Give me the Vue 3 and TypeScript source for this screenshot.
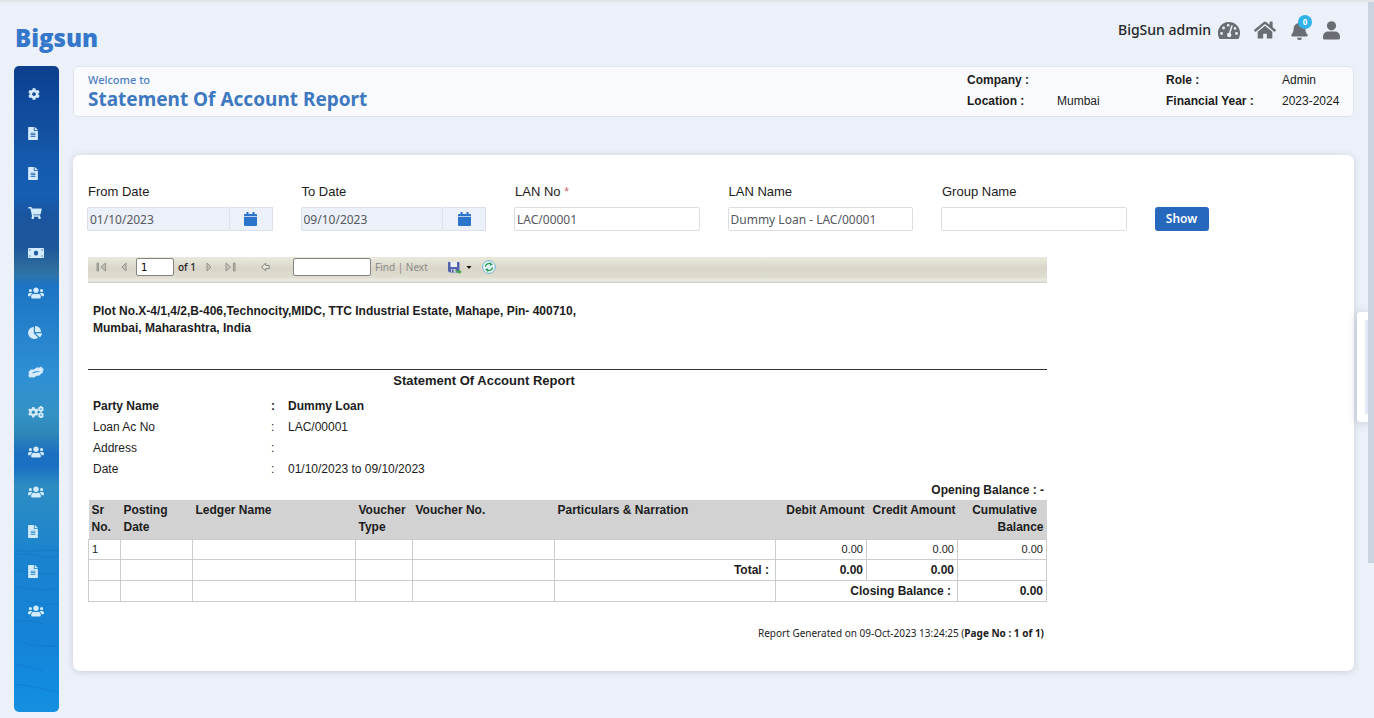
<script setup lang="ts">
import { ref } from 'vue'

interface Glyph {
  box: string
  width: number
  height: number
  path: string
}

const filePath =
  'M224 136V0H24C10.700 0 0 10.700 0 24v464c0 13.300 10.700 24 24 24h336c13.300 0 24-10.700 24-24V160H248c-13.200 0-24-10.800-24-24zm64 236c0 6.600-5.400 12-12 12H108c-6.600 0-12-5.400-12-12v-8c0-6.600 5.400-12 12-12h168c6.600 0 12 5.400 12 12v8zm0-64c0 6.600-5.400 12-12 12H108c-6.600 0-12-5.400-12-12v-8c0-6.600 5.400-12 12-12h168c6.600 0 12 5.400 12 12v8zm0-72v8c0 6.600-5.400 12-12 12H108c-6.600 0-12-5.400-12-12v-8c0-6.600 5.400-12 12-12h168c6.600 0 12 5.400 12 12zm96-114.100v6.100H256V0h6.100c6.400 0 12.500 2.500 17 7l97.900 98c4.500 4.500 7 10.600 7 16.900z'

const glyphs: Record<string, Glyph> = {
  cog: {
    box: '0 0 512 512', width: 12, height: 12,
    path: 'M487.4 315.7l-42.6-24.6c4.3-23.2 4.3-47 0-70.2l42.6-24.6c4.900-2.800 7.100-8.600 5.500-14-11.100-35.600-30-67.800-54.700-94.600-3.800-4.100-10-5.100-14.800-2.300L380.800 110c-17.900-15.400-38.500-27.300-60.800-35.100V25.800c0-5.600-3.900-10.500-9.400-11.700-36.700-8.200-74.300-7.800-109.200 0-5.500 1.200-9.400 6.100-9.400 11.700V75c-22.200 7.900-42.800 19.800-60.800 35.100L88.700 85.500c-4.900-2.800-11-1.900-14.800 2.300-24.700 26.700-43.600 58.900-54.700 94.600-1.700 5.400.6 11.200 5.500 14L67.300 221c-4.300 23.200-4.300 47 0 70.200l-42.600 24.600c-4.900 2.800-7.100 8.600-5.500 14 11.100 35.600 30 67.800 54.700 94.600 3.800 4.100 10 5.100 14.800 2.300l42.600-24.600c17.900 15.400 38.500 27.300 60.800 35.100v49.200c0 5.600 3.900 10.500 9.400 11.700 36.700 8.200 74.300 7.800 109.200 0 5.500-1.200 9.400-6.100 9.400-11.700v-49.200c22.200-7.900 42.800-19.800 60.800-35.100l42.600 24.600c4.900 2.800 11 1.900 14.800-2.300 24.700-26.700 43.600-58.900 54.700-94.600 1.500-5.500-.7-11.300-5.600-14.100zM256 336c-44.100 0-80-35.900-80-80s35.900-80 80-80 80 35.900 80 80-35.900 80-80 80z',
  },
  file: { box: '0 0 384 512', width: 10, height: 13, path: filePath },
  cart: {
    box: '0 0 576 512', width: 14, height: 12,
    path: 'M528.120 301.319l47.273-208C578.806 78.301 567.391 64 551.990 64H159.208l-9.166-44.810C147.758 8.021 137.930 0 126.529 0H24C10.745 0 0 10.745 0 24v16c0 13.255 10.745 24 24 24h69.883l70.248 343.435C147.325 417.100 136 435.222 136 456c0 30.928 25.072 56 56 56s56-25.072 56-56c0-15.674-6.447-29.835-16.824-40h209.647C430.447 426.165 424 440.326 424 456c0 30.928 25.072 56 56 56s56-25.072 56-56c0-22.172-12.888-41.332-31.579-50.405l5.517-24.276c3.413-15.018-8.002-29.319-23.403-29.319H218.117l-6.545-32h293.145c11.206 0 20.920-7.754 23.403-18.681z',
  },
  money: {
    box: '0 0 16 10', width: 16, height: 10,
    path: 'M1 0h14a1 1 0 0 1 1 1v8a1 1 0 0 1-1 1H1a1 1 0 0 1-1-1V1a1 1 0 0 1 1-1zM8 2.400a2.200 2.600 0 1 0 0 5.200a2.200 2.600 0 1 0 0-5.200zM1.400 1.400v1.400a1.400 1.400 0 0 0 1.400-1.400zM14.600 1.400h-1.400a1.400 1.400 0 0 0 1.400 1.400zM1.400 8.600h1.400a1.400 1.400 0 0 0-1.400-1.400zM14.600 8.600v-1.400a1.400 1.400 0 0 0-1.400 1.400z',
  },
  users: {
    box: '0 16 640 480', width: 16, height: 12,
    path: 'M96 224c35.300 0 64-28.700 64-64s-28.700-64-64-64-64 28.700-64 64 28.700 64 64 64zm448 0c35.300 0 64-28.700 64-64s-28.700-64-64-64-64 28.700-64 64 28.700 64 64 64zm32 32h-64c-17.600 0-33.500 7.100-45.100 18.600 40.300 22.100 68.900 62 75.100 109.400h66c17.700 0 32-14.300 32-32v-32c0-35.300-28.700-64-64-64zm-256 0c61.900 0 112-50.100 112-112S381.900 32 320 32 208 82.100 208 144s50.100 112 112 112zm76.800 32h-8.300c-20.800 10-43.900 16-68.500 16s-47.600-6-68.500-16h-8.300C179.600 288 128 339.600 128 403.200V432c0 26.500 21.500 48 48 48h288c26.500 0 48-21.500 48-48v-28.800c0-63.600-51.600-115.200-115.200-115.200zm-223.700-13.400C161.500 263.100 145.600 256 128 256H64c-35.300 0-64 28.700-64 64v32c0 17.700 14.300 32 32 32h65.900c6.300-47.400 34.900-87.300 75.200-109.400z',
  },
  pie: {
    box: '0 0 544 512', width: 14, height: 13,
    path: 'M527.790 288H290.500l158.030 158.030c6.040 6.040 15.980 6.530 22.190.680 38.700-36.460 65.320-85.610 73.130-140.860 1.340-9.460-6.510-17.850-16.060-17.850zm-15.830-64.800C503.720 103.740 408.260 8.280 288.800.040 279.680-.590 272 7.100 272 16.240V240h223.770c9.140 0 16.820-7.680 16.190-16.800zM224 288V50.710c0-9.550-8.390-17.400-17.840-16.060C86.990 51.490-4.100 155.600.140 280.370 4.500 408.510 114.830 513.590 243.030 511.980c50.400-.630 96.970-16.870 135.260-44.030 7.900-5.600 8.420-17.230 1.570-24.080L224 288z',
  },
  hands: {
    box: '0 0 16 12', width: 16, height: 12,
    path: 'M0.400 6.200L2.600 3.600 6 3.400 8.600 1.600 11.600 1.400 13.200 0.600 15.800 3.800 14.600 5.200 15 6.600 12.800 8 11.600 9.600 8.800 9.800 6 11.600 3 11.200 1.600 11.800 0.200 9.200 1.200 8zM4.400 6.600l.5.800 3-1.100 3.400-.2.200-.8-3.600-.1z',
  },
  cogs: {
    box: '0 0 16 12', width: 16, height: 12,
    path: 'M4.300 1h2l.4 1.500 1.200.6 1.500-.5 1 1.700L9.300 5.500v1.300l1.100 1.100-1 1.700-1.500-.4-1.200.7-.4 1.500h-2l-.4-1.500-1.200-.7-1.500.4-1-1.700 1.100-1.100V5.500L.2 4.300l1-1.700 1.500.5 1.200-.6zM5.300 4.500a1.700 1.700 0 1 0 0 3.400a1.700 1.700 0 1 0 0-3.400zM12.200 0h1.400l.4.8 1 .1.700 1.200-.5.900.5.900-.7 1.200-1 .1-.4.800h-1.400l-.4-.8-1-.1-.7-1.200.5-.9-.5-.9.700-1.200 1-.1zM12.900 2.200a.8.8 0 1 0 0 1.600a.8.8 0 1 0 0-1.600zM12.200 6.200h1.400l.4.800 1 .1.700 1.200-.5.900.5.900-.7 1.200-1 .1-.4.800h-1.400l-.4-.8-1-.1-.7-1.200.5-.9-.5-.9.700-1.200 1-.1zM12.900 8.300a.8.8 0 1 0 0 1.600a.8.8 0 1 0 0-1.600z',
  },
}

const menu: { icon: string; title: string }[] = [
  { icon: 'cog', title: 'Settings' },
  { icon: 'file', title: 'Documents' },
  { icon: 'file', title: 'Forms' },
  { icon: 'cart', title: 'Purchases' },
  { icon: 'money', title: 'Payments' },
  { icon: 'users', title: 'Customers' },
  { icon: 'pie', title: 'Analytics' },
  { icon: 'hands', title: 'Partners' },
  { icon: 'cogs', title: 'Utilities' },
  { icon: 'users', title: 'Members' },
  { icon: 'users', title: 'Groups' },
  { icon: 'file', title: 'Statements' },
  { icon: 'file', title: 'Reports' },
  { icon: 'users', title: 'Staff' },
]

const fromDate = ref('01/10/2023')
const toDate = ref('09/10/2023')
const lanNo = ref('LAC/00001')
const lanName = ref('Dummy Loan - LAC/00001')
const groupName = ref('')
const page = ref('1')
const search = ref('')

const details = [
  { label: 'Party Name', value: 'Dummy Loan', strong: true },
  { label: 'Loan Ac No', value: 'LAC/00001', strong: false },
  { label: 'Address', value: '', strong: false },
  { label: 'Date', value: '01/10/2023 to 09/10/2023', strong: false },
]
</script>

<template>
  <div class="page">
    <header class="top">
      <a class="brand" href="#">Bigsun</a>
      <nav class="tools" aria-label="Account">
        <span class="who">BigSun admin</span>
        <a href="#" class="tool dash" aria-label="Dashboard">
          <svg width="22" height="17" viewBox="0 0 22 17">
            <path fill="#6a6d73" d="M11 0a11 11 0 0 1 11 11c0 2-.5 3.800-1.300 5.400-.2.400-.6.600-1 .6H2.300c-.4 0-.8-.2-1-.6A11 11 0 0 1 11 0z" />
            <g fill="#ecf0f8"><circle cx="3.600" cy="11.500" r="1.400" /><circle cx="5.600" cy="6" r="1.400" /><circle cx="10.200" cy="3.300" r="1.300" /><circle cx="17" cy="6.400" r="1.300" /><circle cx="18.500" cy="11.500" r="1.400" /></g>
            <path d="M13.900 4l-2.300 7.300" stroke="#ecf0f8" stroke-width="1.500" stroke-linecap="round" />
            <circle cx="11.200" cy="13" r="2.200" fill="#ecf0f8" />
          </svg>
        </a>
        <a href="#" class="tool home" aria-label="Home">
          <svg width="22" height="18" viewBox="0 20 576 472">
            <path fill="#6a6d73" d="M280.370 148.260L96 300.110V464a16 16 0 0 0 16 16l112.060-.290a16 16 0 0 0 15.920-16V368a16 16 0 0 1 16-16h64a16 16 0 0 1 16 16v95.640a16 16 0 0 0 16 16.050L464 480a16 16 0 0 0 16-16V300L295.670 148.260a12.190 12.190 0 0 0-15.300 0zM571.600 251.470L488 182.560V44.050a12 12 0 0 0-12-12h-56a12 12 0 0 0-12 12v72.610L318.470 43a48 48 0 0 0-61 0L4.340 251.470a12 12 0 0 0-1.600 16.900l25.500 31A12 12 0 0 0 45.150 301l235.220-193.740a12.190 12.190 0 0 1 15.300 0L530.900 301a12 12 0 0 0 16.900-1.600l25.500-31a12 12 0 0 0-1.700-16.930z" />
          </svg>
        </a>
        <a href="#" class="tool bell" aria-label="Notifications">
          <svg width="17" height="19" viewBox="0 0 448 512">
            <path fill="#6a6d73" d="M224 512c35.320 0 63.970-28.650 63.970-64H160.030c0 35.350 28.650 64 63.970 64zm215.390-149.710c-19.320-20.760-55.470-51.990-55.470-154.290 0-77.700-54.480-139.900-127.940-155.160V32c0-17.670-14.320-32-31.980-32s-31.980 14.330-31.980 32v20.840C118.560 68.100 64.080 130.300 64.080 208c0 102.300-36.150 133.530-55.470 154.290-6 6.450-8.660 14.160-8.610 21.710.11 16.400 12.980 32 32.100 32h383.800c19.120 0 32-15.600 32.100-32 .05-7.550-2.610-15.270-8.610-21.710z" />
          </svg>
          <span class="count">0</span>
        </a>
        <a href="#" class="tool" aria-label="Profile">
          <svg width="17" height="19" viewBox="0 0 17 19">
            <circle cx="8.500" cy="4.800" r="4.600" fill="#6a6d73" />
            <path fill="#6a6d73" d="M5 10.600h7a5 5 0 0 1 5 5V17a1.600 1.600 0 0 1-1.600 1.600H1.600A1.600 1.600 0 0 1 0 17v-1.400a5 5 0 0 1 5-5z" />
          </svg>
        </a>
      </nav>
    </header>

    <div class="body">
      <nav class="side" aria-label="Main">
        <svg class="sea" viewBox="0 0 45 646" preserveAspectRatio="none" aria-hidden="true">
          <g fill="none" stroke="#0a62b4" stroke-width="1" opacity=".25">
            <path d="M0 484q12 3 22 1t23 0M0 489q14-2 24 1t21-1M0 504q20 4 45 4M0 520q18 5 45 3M10 534q16 6 35 4M0 556q16-3 30 2M8 576q16 6 37 4M0 598q18 3 30 7M0 618q20 2 45 9" />
          </g>
        </svg>
        <a v-for="(item, i) in menu" :key="i" href="#" class="entry" :aria-label="item.title">
          <svg :width="glyphs[item.icon].width" :height="glyphs[item.icon].height" :viewBox="glyphs[item.icon].box">
            <path :d="glyphs[item.icon].path" fill="#d3ebfd" fill-rule="evenodd" />
          </svg>
        </a>
      </nav>

      <main class="main">
        <section class="banner">
          <div>
            <div class="welcome">Welcome to</div>
            <h1>Statement Of Account Report</h1>
          </div>
          <dl class="facts">
            <dt>Company :</dt><dd></dd>
            <dt>Role :</dt><dd>Admin</dd>
            <dt>Location :</dt><dd>Mumbai</dd>
            <dt>Financial Year :</dt><dd>2023-2024</dd>
          </dl>
        </section>

        <section class="card">
          <form class="filters" @submit.prevent>
            <div class="field">
              <label for="from">From Date</label>
              <div class="date">
                <input id="from" v-model="fromDate" type="text">
                <button type="button" aria-label="Choose from date">
                  <svg width="13" height="14" viewBox="0 0 13 14"><path fill="#2b74cc" d="M2.500 0h2v2h4V0h2v2H12a1 1 0 0 1 1 1v1.300H0V3a1 1 0 0 1 1-1h1.500zM0 5h13v8a1 1 0 0 1-1 1H1a1 1 0 0 1-1-1z" /></svg>
                </button>
              </div>
            </div>
            <div class="field">
              <label for="to">To Date</label>
              <div class="date">
                <input id="to" v-model="toDate" type="text">
                <button type="button" aria-label="Choose to date">
                  <svg width="13" height="14" viewBox="0 0 13 14"><path fill="#2b74cc" d="M2.500 0h2v2h4V0h2v2H12a1 1 0 0 1 1 1v1.300H0V3a1 1 0 0 1 1-1h1.500zM0 5h13v8a1 1 0 0 1-1 1H1a1 1 0 0 1-1-1z" /></svg>
                </button>
              </div>
            </div>
            <div class="field">
              <label for="lan">LAN No <span class="star">*</span></label>
              <input id="lan" v-model="lanNo" type="text">
            </div>
            <div class="field">
              <label for="lanname">LAN Name</label>
              <input id="lanname" v-model="lanName" type="text">
            </div>
            <div class="field">
              <label for="group">Group Name</label>
              <input id="group" v-model="groupName" type="text">
            </div>
            <div class="field action">
              <button type="submit" class="show">Show</button>
            </div>
          </form>

          <div class="report">
            <div class="bar">
              <button type="button" class="first" aria-label="First page">
                <svg width="11" height="11" viewBox="0 0 11 11" fill="#c4c3ba" stroke="#94948c"><path d="M1 1h1.500v8H1zM9.500 1v8L5 5z" /></svg>
              </button>
              <button type="button" class="prev" aria-label="Previous page">
                <svg width="6" height="11" viewBox="0 0 6 11" fill="#c4c3ba" stroke="#94948c"><path d="M5 1v8L1 5z" /></svg>
              </button>
              <input v-model="page" class="pageno" type="text" aria-label="Page number">
              <span class="total">of 1</span>
              <button type="button" class="next" aria-label="Next page">
                <svg width="6" height="11" viewBox="0 0 6 11" fill="#c4c3ba" stroke="#94948c"><path d="M1 1v8l4-4z" /></svg>
              </button>
              <button type="button" class="last" aria-label="Last page">
                <svg width="11" height="11" viewBox="0 0 11 11" fill="#c4c3ba" stroke="#94948c"><path d="M1 1v8l4.500-4zM8.500 1H10v8H8.500z" /></svg>
              </button>
              <button type="button" class="back" aria-label="Back to parent report">
                <svg width="9" height="10" viewBox="0 0 9 10" fill="#e8e7de" stroke="#85857d"><path d="M.7 5l4-4v2.500h3.500v3H4.700V9z" /></svg>
              </button>
              <input v-model="search" class="query" type="text" aria-label="Search text">
              <span class="find"><button type="button">Find</button> | <button type="button">Next</button></span>
              <button type="button" class="export" aria-label="Export">
                <svg width="24" height="13" viewBox="0 0 24 13">
                  <path d="M0 1h11.500v10.500H1.500L0 10z" fill="#5562ad" />
                  <path d="M2.500 1h6.500v5H2.500z" fill="#e9edf8" />
                  <path d="M3 8h5v3.500H3z" fill="#cdd2e8" />
                  <path d="M4 8.500h1.500v3H4z" fill="#4a549a" />
                  <path d="M7.500 7.500c.2 2 1.500 2.700 3.200 2.700V8.300L14 11l-3.300 2v-1.300c-2.500.1-4.200-1.500-3.200-4.200z" fill="#4aa84f" />
                  <path d="M18.500 5h5L21 8z" fill="#111" />
                </svg>
              </button>
              <button type="button" class="refresh" aria-label="Refresh">
                <svg width="14" height="14" viewBox="0 0 14 14">
                  <circle cx="7" cy="7" r="6.400" fill="#e5f4f4" stroke="#76b6d0" />
                  <path d="M3.400 6.600a3.600 3.600 0 0 1 5.300-2.700M10.600 7.400a3.600 3.600 0 0 1-5.300 2.700" fill="none" stroke="#2e9e5b" stroke-width="1.300" />
                  <path d="M8 2l3 2.700-3.200 1.100zM6 12l-3-2.700 3.200-1.100z" fill="#2e9e5b" />
                </svg>
              </button>
            </div>

            <p class="address">Plot No.X-4/1,4/2,B-406,Technocity,MIDC, TTC Industrial Estate, Mahape, Pin- 400710,<br>Mumbai, Maharashtra, India</p>

            <h2>Statement Of Account Report</h2>

            <dl class="details">
              <div v-for="d in details" :key="d.label" :class="{ strong: d.strong }">
                <dt>{{ d.label }}</dt><dd class="colon">:</dd><dd>{{ d.value }}</dd>
              </div>
            </dl>

            <div class="opening">Opening Balance : -</div>

            <table>
              <colgroup>
                <col class="c1"><col class="c2"><col class="c3"><col class="c4"><col class="c5"><col><col class="c7"><col class="c7"><col class="c9">
              </colgroup>
              <thead>
                <tr>
                  <th>Sr No.</th><th>Posting Date</th><th>Ledger Name</th><th>Voucher Type</th><th>Voucher No.</th><th>Particulars &amp; Narration</th>
                  <th class="num">Debit Amount</th><th class="num">Credit Amount</th><th class="num">Cumulative&nbsp;&nbsp; Balance</th>
                </tr>
              </thead>
              <tbody>
                <tr class="line">
                  <td>1</td><td></td><td></td><td></td><td></td><td></td>
                  <td class="num">0.00</td><td class="num">0.00</td><td class="num">0.00</td>
                </tr>
                <tr class="sum">
                  <td></td><td></td><td></td><td></td><td></td><td class="num cap">Total :</td>
                  <td class="num">0.00</td><td class="num">0.00</td><td></td>
                </tr>
                <tr class="sum">
                  <td></td><td></td><td></td><td></td><td></td><td></td>
                  <td class="num cap" colspan="2">Closing Balance :</td><td class="num">0.00</td>
                </tr>
              </tbody>
            </table>

            <p class="stamp">Report Generated on 09-Oct-2023 13:24:25 (<b>Page No : 1 of 1)</b></p>
          </div>
        </section>
      </main>
    </div>

    <div class="drawer" aria-hidden="true"></div>
    <div class="scroll" aria-hidden="true"></div>
  </div>
</template>

<style>
body {
  background: #ecf0f8;
}
</style>

<style scoped>
* {
  box-sizing: border-box;
}
.page {
  min-height: 100vh;
  display: flex;
  flex-direction: column;
  position: relative;
  border-top: 2px solid #e2e4e8;
  background: #ecf0f8;
  font-family: "Liberation Sans", Arial, sans-serif;
  font-size: 12px;
  color: #1c1c1c;
}
button {
  font: inherit;
  padding: 0;
  border: 0;
  background: none;
  display: inline-flex;
  align-items: center;
  justify-content: center;
}
a {
  color: inherit;
  text-decoration: none;
}
svg {
  display: block;
  flex: none;
}
input {
  min-width: 0;
}
.top {
  height: 64px;
  padding: 0 34px 0 15px;
  display: flex;
  justify-content: space-between;
  align-items: flex-start;
}
.brand {
  margin-top: 20px;
  font: 800 24px/32px "Open Sans", sans-serif;
  color: #3477cb;
}
.tools {
  margin-top: 16px;
  height: 24px;
  display: flex;
  align-items: center;
  font: 500 14px/24px "Noto Sans", sans-serif;
  color: #25272b;
}
.who {
  margin-right: 7px;
}
.tool {
  position: relative;
}
.dash {
  margin-right: 14px;
}
.home {
  margin-right: 15px;
}
.bell {
  margin-right: 15px;
}
.count {
  position: absolute;
  top: -6px;
  right: -4px;
  width: 14px;
  height: 14px;
  border-radius: 50%;
  background: #2fb3e8;
  color: #fff;
  font: 700 8px/14px "Open Sans", sans-serif;
  text-align: center;
}
.body {
  flex: 1;
  display: grid;
  grid-template-columns: 45px minmax(0, 1fr);
  gap: 14px;
  padding: 0 20px 6px 14px;
}
.side {
  position: relative;
  display: flex;
  flex-direction: column;
  border-radius: 5px;
  overflow: hidden;
  padding: 8px 0 81px;
  background: linear-gradient(#0d3f8c 0%, #0f4a9d 6%, #14509f 10%, #1459ae 14%, #155eb2 20%, #1a559f 23%, #1c579c 28%, #2d6a9c 31%, #2e75ad 32.500%, #1b74c4 34%, #2480cb 40%, #2f8fd4 48%, #3492c4 54%, #2d86b8 57%, #1c6fc0 60%, #1a70c4 62%, #2d8cc2 65%, #2588c8 70%, #1a83d0 76%, #1583d6 88%, #128bdf 96%, #1590e0 100%);
}
.sea {
  position: absolute;
  inset: 0;
  width: 100%;
  height: 100%;
}
.entry {
  position: relative;
  flex: 1;
  display: flex;
  align-items: center;
  padding-left: 14px;
}
.banner {
  height: 51px;
  padding: 3px 14px 0;
  display: flex;
  justify-content: space-between;
  background: #f9fafd;
  border: 1px solid #e0e4ec;
  border-radius: 5px;
}
.welcome {
  margin-top: 2px;
  font: 500 11px/16px "Noto Sans", sans-serif;
  color: #4e80bd;
}
h1 {
  margin: 0;
  font: 700 19px/22px "Noto Sans", sans-serif;
  color: #3d78c0;
}
.facts {
  margin: 0;
  display: grid;
  grid-template-columns: 90px 109px 116px 57px;
  grid-auto-rows: 21px;
  line-height: 21px;
  white-space: nowrap;
}
.facts dt {
  font-weight: 700;
}
dd {
  margin: 0;
}
.card {
  margin-top: 38px;
  min-height: 516px;
  padding: 27px 0 20px;
  background: #fff;
  border-radius: 7px;
  box-shadow: 0 1px 7px rgba(80, 90, 120, .22);
}
.filters {
  display: grid;
  grid-template-columns: repeat(6, minmax(0, 1fr));
}
.field {
  padding: 0 14px;
  display: flex;
  flex-direction: column;
  align-items: stretch;
}
.field label {
  height: 25px;
  padding-left: 1px;
  font-size: 13px;
  line-height: 20px;
}
.star {
  color: #d0686c;
  font-size: 12px;
}
.field input {
  width: 100%;
  height: 24px;
  padding: 0 2px;
  border: 1px solid #dcdee3;
  border-radius: 2px;
  background: #fff;
  font: 400 12px/22px "Noto Sans", sans-serif;
  color: #55585e;
}
.date {
  display: flex;
}
.date input {
  flex: 1;
  background: #ecf0f8;
  border-color: #dbe0ea;
}
.date button {
  width: 43px;
  height: 24px;
  background: #ecf0f8;
  border: 1px solid #dbe0ea;
  border-left: 0;
}
.action {
  padding-top: 25px;
  align-items: flex-start;
}
.show {
  width: 54px;
  height: 24px;
  border-radius: 3px;
  background: #2668bd;
  color: #fff;
  font: 600 12px/24px "Noto Sans", sans-serif;
}
.report {
  margin: 26px 0 0 15px;
  max-width: 959px;
}
.bar {
  height: 26px;
  padding: 0 8px 6px;
  display: flex;
  align-items: center;
  background: linear-gradient(#ebe9dc, #d9d6c9 45%, #dedbcf 75%, #ecebe1 90%, #d8d6cc 96%);
  font: 400 11px/16px "DejaVu Sans", Verdana, sans-serif;
}
.prev {
  margin-left: 14px;
}
.bar input {
  height: 18px;
  padding: 0 4px;
  border: 1px solid #85857f;
  border-radius: 2px;
  background: #fff;
  font: 400 10px/16px "DejaVu Sans", Verdana, sans-serif;
}
.bar .pageno {
  margin-left: 9px;
  width: 38px;
}
.total {
  margin: 0 10px 0 4px;
  font: 500 10px/16px "Noto Sans", sans-serif;
}
.last {
  margin-left: 13px;
}
.back {
  margin-left: 25px;
}
.bar .query {
  margin-left: 23px;
  width: 78px;
}
.find {
  margin-left: 4px;
  font: 400 10px/16px "Noto Sans", sans-serif;
  color: #8b8b85;
}
.find button {
  color: inherit;
}
.export {
  margin-left: 20px;
}
.refresh {
  margin-left: 10px;
}
.address {
  margin: 20px 0 0;
  padding: 0 5px 32px;
  font-weight: 700;
  font-size: 12px;
  line-height: 17px;
  border-bottom: 1px solid #333;
}
h2 {
  margin: 0;
  padding-right: 167px;
  text-align: center;
  font: 700 13px/22px "Liberation Sans", Arial, sans-serif;
}
.details {
  margin: 4px 0 0;
}
.details div {
  display: grid;
  grid-template-columns: 178px 17px 1fr;
  padding-left: 5px;
  min-height: 21px;
  line-height: 21px;
  font-size: 12px;
}
.details .strong {
  font-weight: 700;
}
.opening {
  padding-right: 3px;
  text-align: right;
  font-weight: 700;
  line-height: 20px;
}
table {
  width: 100%;
  table-layout: fixed;
  border-collapse: collapse;
}
.c1 { width: 32px; }
.c2 { width: 72px; }
.c3 { width: 163px; }
.c4 { width: 57px; }
.c5 { width: 142px; }
.c7 { width: 91px; }
.c9 { width: 89px; }
th {
  height: 39px;
  padding: 2px 2px 2px 3px;
  background: #d2d2d2;
  text-align: left;
  vertical-align: top;
  font-size: 12px;
  line-height: 17px;
}
td {
  height: 21px;
  padding: 0 3px;
  border: 1px solid #ccc;
  font-size: 11px;
  line-height: 18px;
}
.line td {
  height: 20px;
}
.sum td {
  font-size: 12px;
  font-weight: 700;
}
th.num,
td.num {
  text-align: right;
  white-space: nowrap;
}
th.num:last-child {
  padding-right: 3px;
  white-space: normal;
}
td.cap {
  padding-right: 6px;
}
.stamp {
  margin: 23px 0 0;
  padding-right: 3px;
  text-align: right;
  font: 400 10px/16px "Noto Sans", sans-serif;
}
.drawer {
  position: absolute;
  top: 310px;
  right: 4px;
  width: 13px;
  height: 110px;
  border: 3px solid #fff;
  border-width: 8px 0 8px 8px;
  border-radius: 4px 0 0 4px;
  background: #e2eaf7;
  box-shadow: -1px 1px 8px rgba(80, 90, 120, .25);
}
.scroll {
  position: absolute;
  top: 0;
  right: 0;
  width: 6px;
  height: 561px;
  background: #cad4e1;
}
</style>
